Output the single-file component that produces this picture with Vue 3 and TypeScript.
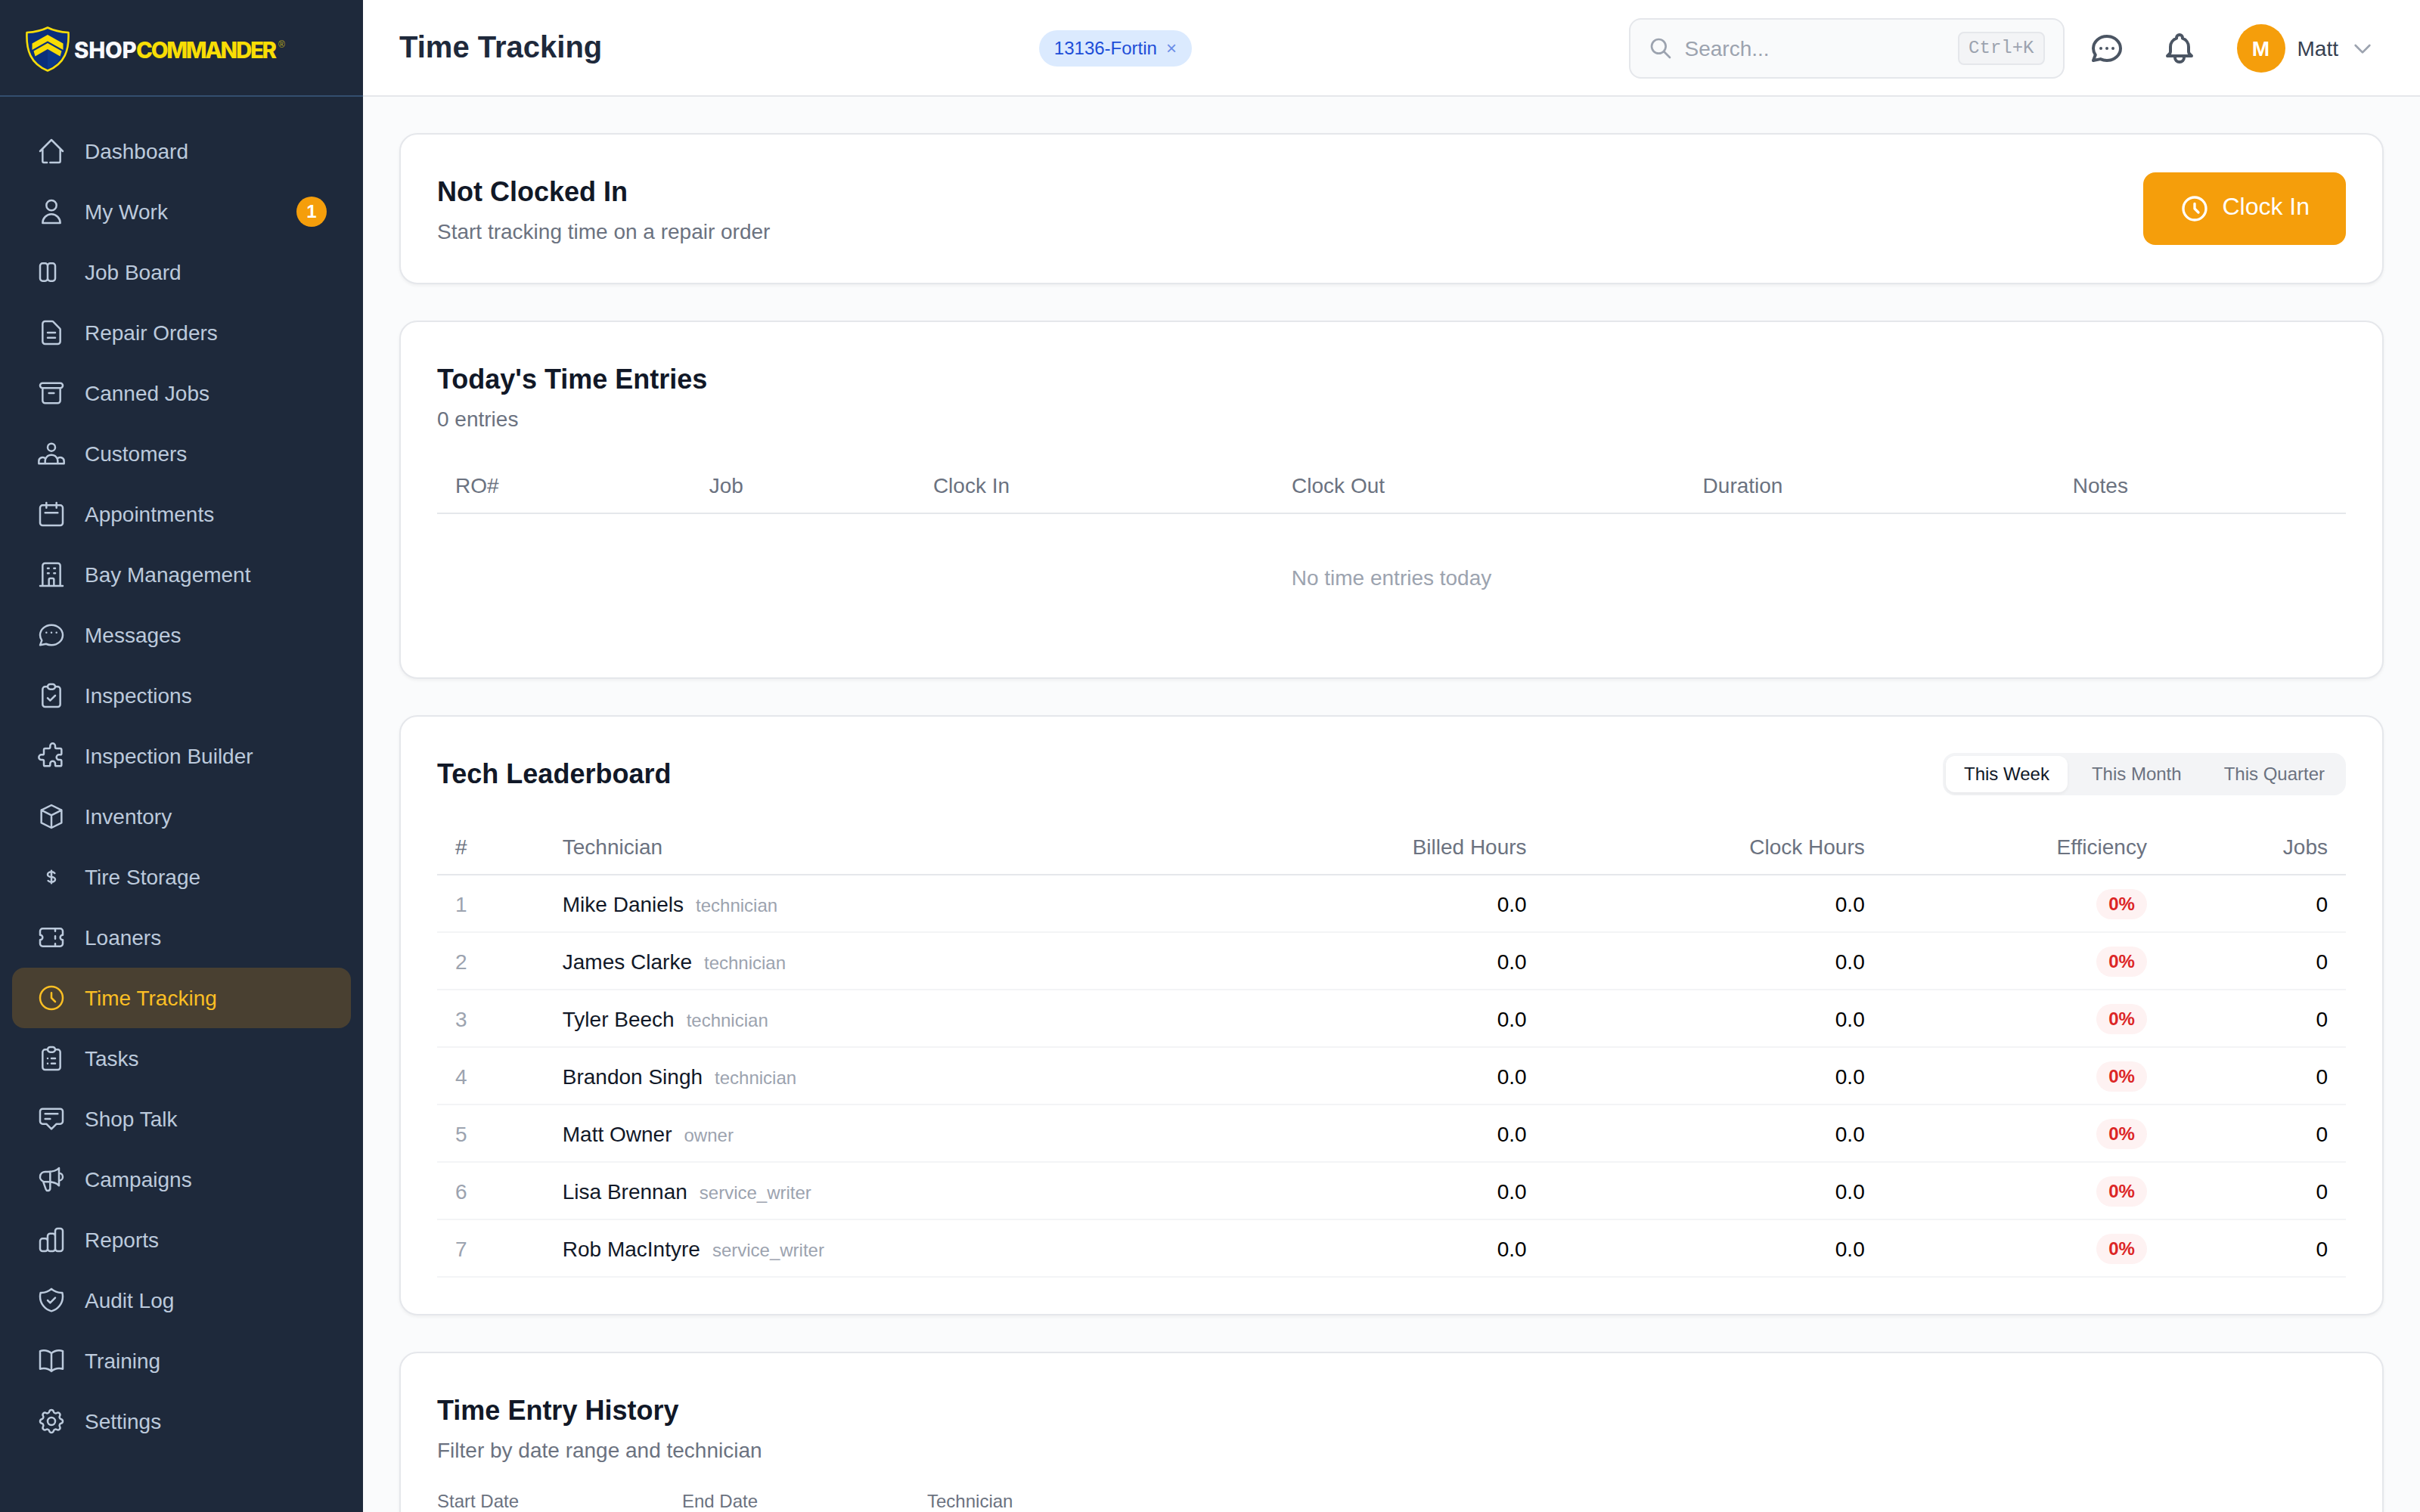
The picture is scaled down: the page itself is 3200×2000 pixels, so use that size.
<script setup lang="ts">
import { ref } from 'vue'

interface NavItem {
  label: string
  icon: string
  badge?: number
}

interface Tech {
  name: string
  role: string
}

const CLOCK = 'M12 8v4l3 3m6-3a9 9 0 11-18 0 9 9 0 0118 0z'
const CLIPBOARD =
  'M9 5H7a2 2 0 00-2 2v12a2 2 0 002 2h10a2 2 0 002-2V7a2 2 0 00-2-2h-2M9 5a2 2 0 002 2h2a2 2 0 002-2M9 5a2 2 0 012-2h2a2 2 0 012 2'
const BUBBLE =
  'M21 12c0 4.418-4.03 8-9 8a9.863 9.863 0 01-4.255-.949L3 20l1.395-3.72C3.512 15.042 3 13.574 3 12c0-4.418 4.03-8 9-8s9 3.582 9 8z'

const nav: NavItem[] = [
  { label: 'Dashboard', icon: 'M3 12l9-9 9 9M5 10v10a1 1 0 001 1h2.5M19 10v10a1 1 0 01-1 1h-7' },
  { label: 'My Work', badge: 1, icon: 'M16 7a4 4 0 11-8 0 4 4 0 018 0zM12 14a7 7 0 00-7 7h14a7 7 0 00-7-7z' },
  {
    label: 'Job Board',
    icon: 'M9 17V7m0 10a2 2 0 01-2 2H5a2 2 0 01-2-2V7a2 2 0 012-2h2a2 2 0 012 2m0 10a2 2 0 002 2h2a2 2 0 002-2V7a2 2 0 00-2-2h-2a2 2 0 00-2 2',
  },
  {
    label: 'Repair Orders',
    icon: 'M9 12h6m-6 4h6m2 5H7a2 2 0 01-2-2V5a2 2 0 012-2h5.586a1 1 0 01.707.293l5.414 5.414a1 1 0 01.293.707V19a2 2 0 01-2 2z',
  },
  { label: 'Canned Jobs', icon: 'M5 8h14M5 8a2 2 0 110-4h14a2 2 0 110 4M5 8v10a2 2 0 002 2h10a2 2 0 002-2V8m-9 4h4' },
  {
    label: 'Customers',
    icon: 'M17 20h5v-2a3 3 0 00-5.356-1.857M17 20H7m10 0v-2c0-.656-.126-1.283-.356-1.857M7 20H2v-2a3 3 0 015.356-1.857M7 20v-2c0-.656.126-1.283.356-1.857m0 0a5.002 5.002 0 019.288 0M15 7a3 3 0 11-6 0 3 3 0 016 0z',
  },
  { label: 'Appointments', icon: 'M8 7V3m8 4V3m-9 8h10M5 21h14a2 2 0 002-2V7a2 2 0 00-2-2H5a2 2 0 00-2 2v12a2 2 0 002 2z' },
  {
    label: 'Bay Management',
    icon: 'M19 21V5a2 2 0 00-2-2H7a2 2 0 00-2 2v16m14 0h2m-2 0h-5m-9 0H3m2 0h5M9 7h1m-1 4h1m4-4h1m-1 4h1m-5 10v-5a1 1 0 011-1h2a1 1 0 011 1v5m-4 0h4',
  },
  { label: 'Messages', icon: 'M8 10h.01M12 10h.01M16 10h.01' + BUBBLE },
  { label: 'Inspections', icon: CLIPBOARD + 'm-6 9l2 2 4-4' },
  {
    label: 'Inspection Builder',
    icon: 'M11 4a2 2 0 114 0v1a1 1 0 001 1h3a1 1 0 011 1v3a1 1 0 01-1 1h-1a2 2 0 100 4h1a1 1 0 011 1v3a1 1 0 01-1 1h-3a1 1 0 01-1-1v-1a2 2 0 10-4 0v1a1 1 0 01-1 1H7a1 1 0 01-1-1v-3a1 1 0 00-1-1H4a2 2 0 110-4h1a1 1 0 001-1V7a1 1 0 011-1h3a1 1 0 001-1V4z',
  },
  { label: 'Inventory', icon: 'M20 7l-8-4-8 4m16 0l-8 4m8-4v10l-8 4m0-10L4 7m8 4v10M4 7v10l8 4' },
  {
    label: 'Tire Storage',
    icon: 'M12 8c-1.657 0-3 .895-3 2s1.343 2 3 2 3 .895 3 2-1.343 2-3 2m0-8c1.11 0 2.08.402 2.599 1M12 8V7m0 1v8m0 0v1m0-1c-1.11 0-2.08-.402-2.599-1',
  },
  {
    label: 'Loaners',
    icon: 'M15 5v2m0 4v2m0 4v2M5 5a2 2 0 00-2 2v3a2 2 0 110 4v3a2 2 0 002 2h14a2 2 0 002-2v-3a2 2 0 110-4V7a2 2 0 00-2-2H5z',
  },
  { label: 'Time Tracking', icon: CLOCK },
  { label: 'Tasks', icon: CLIPBOARD + 'm-3 7h3m-3 4h3m-6-4h.01M9 16h.01' },
  {
    label: 'Shop Talk',
    icon: 'M7 8h10M7 12h4m1 8l-4-4H5a2 2 0 01-2-2V6a2 2 0 012-2h14a2 2 0 012 2v8a2 2 0 01-2 2h-3l-4 4z',
  },
  {
    label: 'Campaigns',
    icon: 'M11 5.882V19.24a1.76 1.76 0 01-3.417.592l-2.147-6.15M18 13a3 3 0 100-6M5.436 13.683A4.001 4.001 0 017 6h1.832c4.1 0 7.625-1.234 9.168-3v14c-1.543-1.766-5.067-3-9.168-3H7a3.988 3.988 0 01-1.564-.317z',
  },
  {
    label: 'Reports',
    icon: 'M9 19v-6a2 2 0 00-2-2H5a2 2 0 00-2 2v6a2 2 0 002 2h2a2 2 0 002-2zm0 0V9a2 2 0 012-2h2a2 2 0 012 2v10m-6 0a2 2 0 002 2h2a2 2 0 002-2m0 0V5a2 2 0 012-2h2a2 2 0 012 2v14a2 2 0 01-2 2h-2a2 2 0 01-2-2z',
  },
  {
    label: 'Audit Log',
    icon: 'M9 12l2 2 4-4m5.618-4.016A11.955 11.955 0 0112 2.944a11.955 11.955 0 01-8.618 3.04A12.02 12.02 0 003 9c0 5.591 3.824 10.29 9 11.622 5.176-1.332 9-6.03 9-11.622 0-1.042-.133-2.052-.382-3.016z',
  },
  {
    label: 'Training',
    icon: 'M12 6.042A8.967 8.967 0 006 3.75c-1.052 0-2.062.18-3 .512v14.25A8.987 8.987 0 016 18c2.305 0 4.408.867 6 2.292m0-14.25a8.966 8.966 0 016-2.292c1.052 0 2.062.18 3 .512v14.25A8.987 8.987 0 0018 18a8.967 8.967 0 00-6 2.292m0-14.25v14.25',
  },
  {
    label: 'Settings',
    icon: 'M10.325 4.317c.426-1.756 2.924-1.756 3.35 0a1.724 1.724 0 002.573 1.066c1.543-.94 3.31.826 2.37 2.37a1.724 1.724 0 001.065 2.572c1.756.426 1.756 2.924 0 3.35a1.724 1.724 0 00-1.066 2.573c.94 1.543-.826 3.31-2.37 2.37a1.724 1.724 0 00-2.572 1.065c-.426 1.756-2.924 1.756-3.35 0a1.724 1.724 0 00-2.573-1.066c-1.543.94-3.31-.826-2.37-2.37a1.724 1.724 0 00-1.065-2.572c-1.756-.426-1.756-2.924 0-3.35a1.724 1.724 0 001.066-2.573c-.94-1.543.826-3.31 2.37-2.37.996.608 2.296.07 2.572-1.065zM15 12a3 3 0 11-6 0 3 3 0 016 0z',
  },
]

const active = ref('Time Tracking')

const periods = ['This Week', 'This Month', 'This Quarter']
const period = ref('This Week')

const entryColumns = ['RO#', 'Job', 'Clock In', 'Clock Out', 'Duration', 'Notes']

const techs: Tech[] = [
  { name: 'Mike Daniels', role: 'technician' },
  { name: 'James Clarke', role: 'technician' },
  { name: 'Tyler Beech', role: 'technician' },
  { name: 'Brandon Singh', role: 'technician' },
  { name: 'Matt Owner', role: 'owner' },
  { name: 'Lisa Brennan', role: 'service_writer' },
  { name: 'Rob MacIntyre', role: 'service_writer' },
]

const filters = ['Start Date', 'End Date', 'Technician']
</script>

<template>
  <div class="app">
    <aside class="sidebar">
      <div class="brand">
        <svg class="shield" width="58" height="60" viewBox="34 35 58 60">
          <path d="M63 36.5C54 41 45 42.5 35.500 43C34.500 66 40 84 63 93.500C86 84 91.500 66 90.500 43C81 42.500 72 41 63 36.500Z" fill="#0a2f7c" stroke="#f5dc0a" stroke-width="2.600" stroke-linejoin="round" />
          <path d="M63 64L83 68C80.500 78.500 75 85.500 63 90.500Z" fill="#0c3f94" opacity=".55" />
          <path d="M42.500 57.500L63 46L83.500 57.500V66L63 54.500L42.500 66Z" fill="#f8dd05" />
          <path d="M44.500 67.500L63 57L81.500 67.500L79.500 74.500L63 65L46.500 74.500Z" fill="#f8dd05" />
        </svg>
        <span class="word word-light">SHOP</span>
        <span class="word word-gold">COMMANDER</span>
        <span class="reg">®</span>
      </div>
      <nav class="nav">
        <a v-for="item in nav" :key="item.label" class="nav-item" :class="{ active: item.label === active }" @click="active = item.label">
          <svg class="icon" viewBox="0 0 24 24"><path :d="item.icon" /></svg>
          <span class="nav-label">{{ item.label }}</span>
          <span v-if="item.badge" class="badge">{{ item.badge }}</span>
        </a>
      </nav>
    </aside>

    <div class="main">
      <header class="topbar">
        <h1 class="page-title">Time Tracking</h1>
        <div class="chip-area">
          <span class="chip">13136-Fortin<span class="chip-x">×</span></span>
        </div>
        <div class="search">
          <svg class="icon icon-sm bold" viewBox="0 0 24 24"><path d="M21 21l-6-6m2-5a7 7 0 11-14 0 7 7 0 0114 0z" /></svg>
          <span class="search-text">Search...</span>
          <kbd class="kbd">Ctrl+K</kbd>
        </div>
        <button class="icon-btn"><svg class="icon icon-lg bold" viewBox="0 0 24 24"><path :d="'M8 12h.01M12 12h.01M16 12h.01' + BUBBLE" /></svg></button>
        <button class="icon-btn"><svg class="icon icon-lg bold" viewBox="0 0 24 24"><path d="M15 17h5l-1.405-1.405A2.032 2.032 0 0118 14.158V11a6.002 6.002 0 00-4-5.659V5a2 2 0 10-4 0v.341C7.67 6.165 6 8.388 6 11v3.159c0 .538-.214 1.055-.595 1.436L4 17h5m6 0v1a3 3 0 11-6 0v-1m6 0H9" /></svg></button>
        <div class="user">
          <span class="avatar">M</span>
          <span class="user-name">Matt</span>
          <svg class="icon icon-sm bold chevron" viewBox="0 0 24 24"><path d="M19 9l-7 7-7-7" /></svg>
        </div>
      </header>

      <main class="content">
        <section class="card clock-card">
          <div>
            <h2 class="card-title">Not Clocked In</h2>
            <p class="card-sub">Start tracking time on a repair order</p>
          </div>
          <button class="clock-btn">
            <svg class="icon bold" viewBox="0 0 24 24"><path :d="CLOCK" /></svg>
            <span>Clock In</span>
          </button>
        </section>

        <section class="card">
          <h2 class="card-title">Today's Time Entries</h2>
          <p class="card-sub">0 entries</p>
          <table class="table">
            <thead>
              <tr><th v-for="c in entryColumns" :key="c">{{ c }}</th></tr>
            </thead>
            <tbody>
              <tr><td class="empty" :colspan="entryColumns.length">No time entries today</td></tr>
            </tbody>
          </table>
        </section>

        <section class="card">
          <div class="card-head">
            <h2 class="card-title">Tech Leaderboard</h2>
            <div class="tabs">
              <button v-for="p in periods" :key="p" class="tab" :class="{ on: p === period }" @click="period = p">{{ p }}</button>
            </div>
          </div>
          <table class="table board">
            <thead>
              <tr>
                <th>#</th>
                <th>Technician</th>
                <th class="num">Billed Hours</th>
                <th class="num">Clock Hours</th>
                <th class="num">Efficiency</th>
                <th class="num">Jobs</th>
              </tr>
            </thead>
            <tbody>
              <tr v-for="(t, i) in techs" :key="t.name">
                <td class="rank">{{ i + 1 }}</td>
                <td class="tech">{{ t.name }}<span class="role">{{ t.role }}</span></td>
                <td class="num">0.0</td>
                <td class="num">0.0</td>
                <td class="num eff"><span class="pct">0%</span></td>
                <td class="num">0</td>
              </tr>
            </tbody>
          </table>
        </section>

        <section class="card history">
          <h2 class="card-title">Time Entry History</h2>
          <p class="card-sub">Filter by date range and technician</p>
          <div class="filters">
            <div v-for="f in filters" :key="f" class="filter">
              <label>{{ f }}</label>
              <div class="field"></div>
            </div>
          </div>
        </section>
      </main>
    </div>
  </div>
</template>

<style>
html,
body {
  margin: 0;
  overflow: hidden;
}
</style>

<style scoped>
.app {
  display: flex;
  height: 100vh;
  overflow: hidden;
  background: #fafbfc;
  font-family: 'Liberation Sans', Arial, sans-serif;
  font-size: 28px;
  line-height: 40px;
  color: #000;
}
.app * {
  box-sizing: border-box;
}
button {
  border: 0;
  background: none;
  font-family: inherit;
  padding: 0;
}
.icon {
  width: 40px;
  height: 40px;
  flex: none;
  fill: none;
  stroke: currentColor;
  stroke-width: 1.5;
  stroke-linecap: round;
  stroke-linejoin: round;
}
.icon-sm {
  width: 32px;
  height: 32px;
}
.icon-lg {
  width: 48px;
  height: 48px;
}
.bold {
  stroke-width: 2;
}

.sidebar {
  width: 480px;
  flex: none;
  background: #1e293b;
  color: #bccadc;
}
.brand {
  display: flex;
  align-items: center;
  height: 128px;
  padding: 4px 0 0 34px;
  border-bottom: 2px solid #334e6e;
}
.shield {
  flex: none;
  margin-right: 6px;
}
.word {
  flex: none;
  font-family: Inter, 'Open Sans', sans-serif;
  font-weight: 800;
  font-size: 29.5px;
  line-height: 40px;
  padding-top: 2px;
}
.word-light {
  width: 82px;
  color: #f7f8fc;
  letter-spacing: -0.3px;
}
.word-gold {
  width: 188px;
  color: #f8dd05;
  letter-spacing: -2.3px;
}
.reg {
  margin-bottom: 12px;
  font-size: 12px;
  line-height: 14px;
  color: #b8a81c;
}
.nav {
  display: flex;
  flex-direction: column;
  padding: 32px 16px;
}
.nav-item {
  display: flex;
  align-items: center;
  gap: 24px;
  height: 80px;
  padding: 0 32px;
  border-radius: 16px;
}
.nav-item.active {
  background: #494031;
  color: #fbbf24;
}
.nav-label {
  flex: 1;
  padding-top: 2px;
}
.badge {
  width: 40px;
  height: 40px;
  border-radius: 50%;
  background: #f59e0b;
  color: #fff;
  font-size: 24px;
  font-weight: 700;
  text-align: center;
}

.main {
  flex: 1;
  min-width: 0;
  display: flex;
  flex-direction: column;
}
.topbar {
  height: 128px;
  flex: none;
  display: flex;
  align-items: center;
  gap: 16px;
  padding: 2px 48px 0;
  background: #fff;
  border-bottom: 2px solid #e5e7eb;
}
.page-title {
  margin: 0;
  padding-bottom: 4px;
  font-size: 40px;
  line-height: 56px;
  font-weight: 700;
  color: #1e293b;
}
.chip-area {
  flex: 1;
  display: flex;
  justify-content: center;
}
.chip {
  display: flex;
  align-items: center;
  gap: 12px;
  height: 48px;
  padding: 0 20px;
  border-radius: 24px;
  background: #dbeafe;
  color: #1d4ed8;
  font-size: 24px;
}
.chip-x {
  opacity: 0.6;
}
.search {
  display: flex;
  align-items: center;
  width: 576px;
  height: 80px;
  padding: 0 24px;
  gap: 16px;
  border: 2px solid #e5e7eb;
  border-radius: 16px;
  background: #f9fafb;
  color: #9ca3af;
}
.search-text {
  flex: 1;
  padding-top: 2px;
}
.kbd {
  height: 44px;
  padding: 4px 12px;
  border: 2px solid #e5e7eb;
  border-radius: 8px;
  background: #f3f4f6;
  font-family: 'Liberation Mono', monospace;
  font-size: 24px;
  line-height: 32px;
}
.icon-btn {
  display: flex;
  padding: 16px;
  color: #4b5563;
}
.user {
  display: flex;
  align-items: center;
  gap: 16px;
  padding: 0 12px 0 20px;
}
.avatar {
  width: 64px;
  height: 64px;
  padding-top: 1px;
  border-radius: 50%;
  background: #f59e0b;
  color: #fff;
  font-weight: 700;
  line-height: 63px;
  text-align: center;
}
.user-name {
  padding-top: 2px;
  color: #374151;
}
.chevron {
  color: #9ca3af;
}

.content {
  display: flex;
  flex-direction: column;
  gap: 48px;
  padding: 48px;
}
.card {
  flex: none;
  padding: 48px;
  border: 2px solid #e5e7eb;
  border-radius: 24px;
  background: #fff;
  box-shadow: 0 2px 4px rgba(0, 0, 0, 0.05);
}
.clock-card,
.card-head {
  display: flex;
  align-items: center;
  justify-content: space-between;
}
.card-title {
  margin: 0;
  font-size: 36px;
  line-height: 56px;
  font-weight: 700;
  color: #111827;
}
.card-sub {
  margin: 5px 0 -1px;
  color: #6b7280;
}
.clock-btn {
  display: flex;
  align-items: center;
  gap: 16px;
  height: 96px;
  padding: 0 48px;
  border-radius: 16px;
  background: #f59e0b;
  color: #fff;
  font-size: 32px;
  line-height: 48px;
}
.clock-btn span {
  padding-bottom: 6px;
}

.table {
  width: 100%;
  margin-top: 32px;
  border-spacing: 0;
}
.table th {
  height: 74px;
  padding: 17px 24px 15px;
  border-bottom: 2px solid #e5e7eb;
  text-align: left;
  font-weight: 400;
  color: #6b7280;
}
.table td {
  padding: 17px 24px 15px;
}
.table .num {
  text-align: right;
}
.table .empty {
  padding: 65px 24px 63px;
  text-align: center;
  color: #9ca3af;
}
.board td {
  height: 76px;
  padding: 18px 24px 15px;
  border-bottom: 2px solid #f3f4f6;
}
.board td.eff {
  padding: 16px 24px;
}
.board .rank {
  color: #9ca3af;
}
.board td.tech {
  padding: 18px 24px 15px;
  color: #111827;
}
.role {
  margin-left: 16px;
  font-size: 24px;
  line-height: 32px;
  color: #9ca3af;
}
.pct {
  display: inline-block;
  padding: 4px 16px;
  border-radius: 20px;
  background: #fef2f2;
  color: #dc2626;
  font-size: 24px;
  line-height: 32px;
  font-weight: 700;
}

.tabs {
  display: flex;
  gap: 8px;
  padding: 4px;
  border-radius: 16px;
  background: #f3f4f6;
}
.tab {
  height: 48px;
  padding: 0 24px;
  border-radius: 12px;
  font-size: 24px;
  line-height: 32px;
  color: #6b7280;
}
.tab.on {
  background: #fff;
  color: #111827;
  box-shadow: 0 2px 4px rgba(0, 0, 0, 0.05);
}

.filters {
  display: flex;
  gap: 32px;
  margin-top: 32px;
}
.filter {
  width: 292px;
  font-size: 24px;
  line-height: 32px;
  color: #6b7280;
}
.filter label {
  display: block;
}
.field {
  height: 76px;
  margin-top: 8px;
  border: 2px solid #d1d5db;
  border-radius: 16px;
}
</style>
